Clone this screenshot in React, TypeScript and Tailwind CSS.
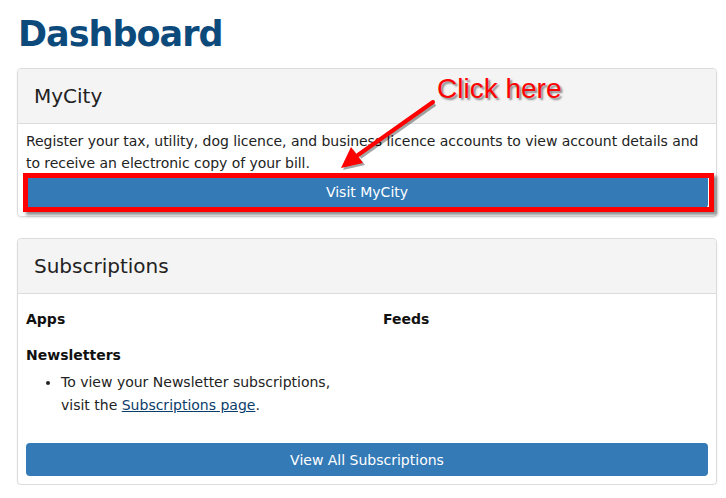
export default function App() {
  return (
    <div className="bg-white font-['DejaVu_Sans',Verdana,sans-serif] text-[#222] pl-[17px] pr-[9px]">
      <h1 className="pt-[14px] pl-[1px] text-[35px] leading-[40px] font-bold text-[#0d4a7c] tracking-[-1px]">
        Dashboard
      </h1>

      <div className="relative mt-[14px] rounded-[4px] border border-[#dcdcdc] shadow-[0_1px_2px_rgba(0,0,0,0.08)]">
        <div className="h-[55px] rounded-t-[4px] bg-[#f4f4f4] border-b border-[#dcdcdc] pl-4 flex items-center text-[20px] text-[#222]">
          MyCity
        </div>
        <div className="px-2 pt-[6px] pb-2 text-[14px] leading-[22px]">
          <p className="tracking-[-0.05px]">
            Register your tax, utility, dog licence, and business licence accounts to view account details and to receive an electronic copy of your bill.
          </p>
          <button className="mt-[1px] w-full h-[33px] rounded-[4px] bg-[#337ab7] text-white text-[14px]">
            Visit MyCity
          </button>
        </div>

        {/* annotation: red box round the button */}
        <div className="absolute left-[5px] top-[104px] w-[691px] h-[39px] border-[5px] border-[#ff0000] shadow-[3px_3px_3px_rgba(0,0,0,0.45)]" />
        {/* annotation: text + arrow */}
        <div className="absolute left-[419px] top-[4px] text-[28px] leading-[32px] text-[#ff0000] font-['Liberation_Sans',Arial,sans-serif] [text-shadow:2px_2px_2px_rgba(0,0,0,0.45)]">
          Click here
        </div>
        <svg className="absolute left-[312px] top-[26px] overflow-visible" width="110" height="80" viewBox="0 0 110 80">
          <g transform="translate(2 2)" opacity="0.35">
            <line x1="103" y1="7" x2="28" y2="60" stroke="#000" strokeWidth="4" />
            <polygon points="11,73 21,52 33,68" fill="#000" />
          </g>
          <line x1="103" y1="7" x2="28" y2="60" stroke="#ff0000" strokeWidth="4" strokeLinecap="round" />
          <polygon points="11,73 21,52 33,68" fill="#ff0000" />
        </svg>
      </div>

      <div className="mt-[21px] rounded-[4px] border border-[#dcdcdc] shadow-[0_1px_2px_rgba(0,0,0,0.08)]">
        <div className="h-[55px] rounded-t-[4px] bg-[#f4f4f4] border-b border-[#dcdcdc] pl-4 flex items-center text-[20px] text-[#222]">
          Subscriptions
        </div>
        <div className="px-2 pt-[14px] pb-2 text-[14px] leading-[22px]">
          <div className="grid grid-cols-2">
            <div>
              <h4 className="font-bold text-[#111]">Apps</h4>
              <h4 className="mt-[14px] font-bold text-[#111]">Newsletters</h4>
              <ul className="mt-[5px] list-disc pl-[35px] leading-[23px]">
                <li>
                  To view your Newsletter subscriptions,
                  <br />
                  visit the <a href="#" className="underline text-[#0b3d6b]">Subscriptions page</a>.
                </li>
              </ul>
            </div>
            <div className="pl-[16px]">
              <h4 className="font-bold text-[#111]">Feeds</h4>
            </div>
          </div>
          <button className="mt-[26px] w-full h-[33px] rounded-[4px] bg-[#337ab7] text-white text-[14px]">
            View All Subscriptions
          </button>
        </div>
      </div>
    </div>
  );
}
